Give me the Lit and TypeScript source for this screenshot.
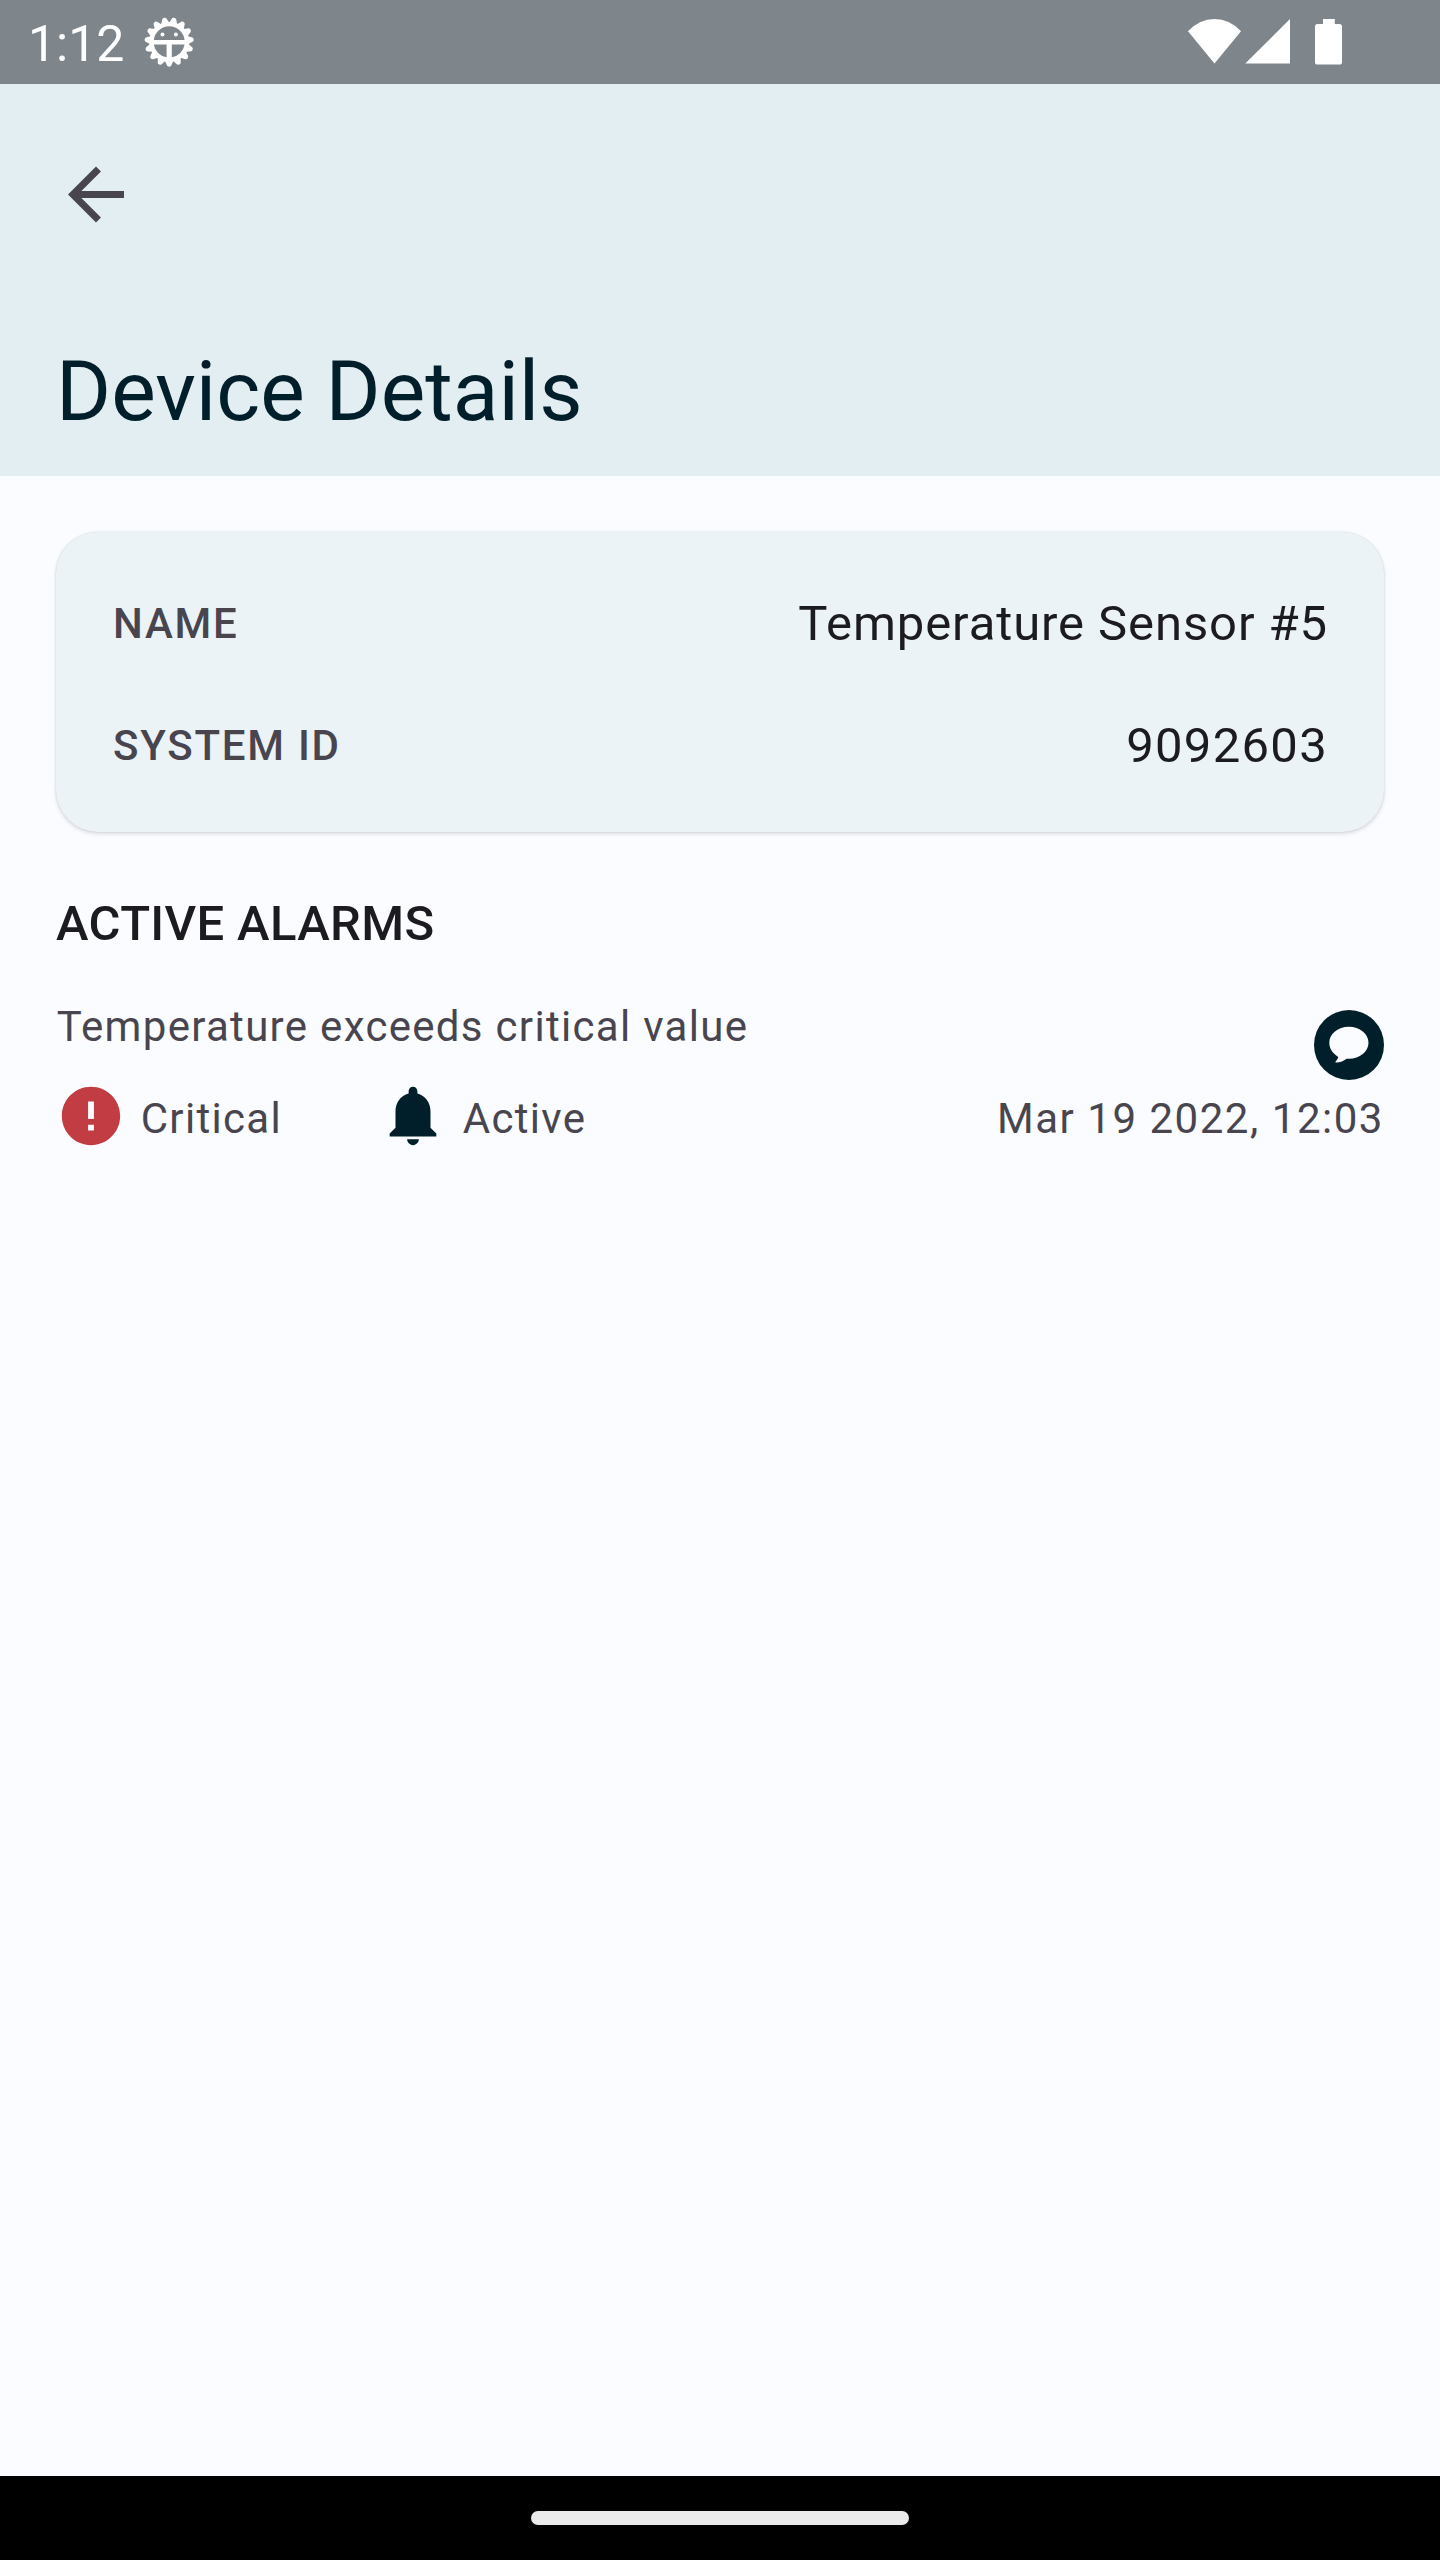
import { LitElement, html, css, svg } from "lit";
import { customElement } from "lit/decorators.js";

// Cog outline with evenly spaced rounded teeth around the origin.
const TEETH = 15;
const teeth = Array.from({ length: TEETH }, (_, i) => 180 + (360 / TEETH) * i);

@customElement("status-bar")
class StatusBar extends LitElement {
  static styles = css`
    :host {
      display: flex;
      align-items: center;
      justify-content: space-between;
      box-sizing: border-box;
      height: 84px;
      padding: 0 96px 0 28px;
      background: #7f868b;
      color: #fff;
    }
    .side {
      display: flex;
      align-items: center;
    }
    .clock {
      font-size: 50px;
      line-height: 58px;
      width: 115px;
      padding-top: 3px;
    }
    svg {
      display: block;
      fill: #fff;
    }
  `;

  render() {
    return html`
      <div class="side">
        <span class="clock">1:12</span>
        <svg width="52" height="52" viewBox="-26.2 -26 52 52">
          <path
            fill-rule="evenodd"
            d="M0-20A20 20 0 1 1 0 20A20 20 0 1 1 0-20ZM-15.4-2A15.5 15.5 0 0 1 15.4-2ZM-15.4 2.4H-2.6V15.3A15.5 15.5 0 0 1-15.4 2.4ZM2.6 2.4H15.4A15.5 15.5 0 0 1 2.6 15.3Z"
          />
          ${teeth.map(
            (a) => svg`<path transform="rotate(${a})" d="M-4.2-18.5L-2.5-22.7C-1.9-25.3 1.9-25.3 2.5-22.7L4.2-18.5Z"/>`
          )}
          <circle cx="-6.7" cy="-7.6" r="2" />
          <circle cx="6.7" cy="-7.6" r="2" />
        </svg>
      </div>
      <div class="side">
        <svg width="156" height="84" viewBox="1188 0 156 84">
          <path d="M1188 31.2Q1199.5 19 1214.5 19T1241 31.2L1214.5 63.5Z" />
          <path d="M1290 19V63.6H1245.3Z" />
          <path d="M1323 19H1334.8V24H1339.5Q1342 24 1342 26.5V62Q1342 64.6 1339.5 64.6H1317.5Q1315 64.6 1315 62V26.5Q1315 24 1317.5 24H1323Z" />
        </svg>
      </div>
    `;
  }
}

@customElement("top-bar")
class TopBar extends LitElement {
  static styles = css`
    :host {
      display: flex;
      flex-direction: column;
      justify-content: space-between;
      box-sizing: border-box;
      height: 392px;
      padding: 68px 56px 28px 54px;
      background: #e2eef2;
    }
    .back {
      display: block;
      width: 84px;
      height: 84px;
      fill: #49454f;
    }
    .title {
      margin: 0 0 0 2px;
      font-size: 84px;
      line-height: 112px;
      font-weight: 400;
      color: #001f2a;
    }
  `;

  render() {
    return html`
      <svg class="back" viewBox="0 -0.14 24 24">
        <path d="M20 11H7.83l5.59-5.59L12 4l-8 8 8 8 1.41-1.41L7.83 13H20v-2z" />
      </svg>
      <h1 class="title">Device Details</h1>
    `;
  }
}

@customElement("info-card")
class InfoCard extends LitElement {
  static properties = { rows: { attribute: false } };
  declare rows: [string, string][];

  static styles = css`
    :host {
      display: flex;
      flex-direction: column;
      gap: 52px;
      padding: 57px 56px 51px 57px;
      border-radius: 42px;
      background: #ebf3f6;
      box-shadow: 0 2px 4px rgba(0, 0, 0, 0.12), 0 0 2px rgba(0, 0, 0, 0.14);
    }
    .row {
      display: flex;
      align-items: center;
      justify-content: space-between;
      height: 70px;
    }
    .label {
      font-size: 42px;
      line-height: 56px;
      font-weight: 500;
      letter-spacing: 1.75px;
      color: #49454f;
    }
    .value {
      font-size: 49px;
      line-height: 70px;
      letter-spacing: 0.9px;
      color: #1c1b1f;
    }
    .numeric {
      letter-spacing: 1.3px;
    }
  `;

  render() {
    return this.rows.map(
      ([label, value]) => html`
        <div class="row">
          <span class="label">${label}</span>
          <span class="value ${/^\d+$/.test(value) ? "numeric" : ""}">${value}</span>
        </div>
      `
    );
  }
}

@customElement("alarm-item")
class AlarmItem extends LitElement {
  static styles = css`
    :host {
      display: grid;
      grid-template-columns: 322px 1fr auto;
      font-size: 42px;
      line-height: 56px;
      letter-spacing: 1.31px;
      color: #49454f;
    }
    .message {
      grid-column: 1 / 3;
      padding: 40px 0 0 0.7px;
    }
    .comment {
      display: block;
      justify-self: end;
      margin-top: 51px;
    }
    .state {
      display: flex;
      align-items: flex-start;
      gap: 14.7px;
      padding-top: 1px;
    }
    .text {
      padding-top: 10px;
    }
    .icon {
      display: block;
      width: 70px;
      height: 70px;
    }
    .critical {
      fill: #c13d43;
    }
    .bell {
      fill: #001f2a;
    }
    .time {
      padding-top: 11px;
      letter-spacing: 1.53px;
    }
  `;

  render() {
    return html`
      <span class="message">Temperature exceeds critical value</span>
      <svg class="comment" width="70" height="70" viewBox="0 0 70 70">
        <circle cx="35" cy="35" r="35" fill="#001f2a" />
        <path
          fill="#fbfcff"
          d="M34.9 16.8C45.8 16.8 54.5 23.9 54.5 32.8S45.8 48.8 34.9 48.8L32.5 48.7C29.5 50.8 26.3 52.7 22.2 52.6C21.2 52.5 21.3 51.5 22 50.9C23.3 49.7 24 48.4 24.2 46.9C18.8 43.7 15.3 38.6 15.3 32.8C15.3 23.9 24 16.8 34.9 16.8Z"
        />
      </svg>
      <div class="state">
        <svg class="icon critical" viewBox="0 0 24 24">
          <path d="M12 2C6.48 2 2 6.48 2 12s4.48 10 10 10 10-4.48 10-10S17.52 2 12 2zm1 15h-2v-2h2v2zm0-4h-2V7h2v6z" />
        </svg>
        <span class="text">Critical</span>
      </div>
      <div class="state">
        <svg class="icon bell" viewBox="0 0 24 24">
          <path d="M14 20c0 1.1-.9 2-2 2s-2-.9-2-2zM18 16v-5.5c0-3.07-1.75-5.5-4.5-6.2V3.5C13.5 2.67 12.83 2 12 2s-1.5.67-1.5 1.5v.8C7.75 5 6 7.43 6 10.5V16l-2 2v1h16v-1z" />
        </svg>
        <span class="text">Active</span>
      </div>
      <span class="time">Mar 19 2022, 12:03</span>
    `;
  }
}

@customElement("app-root")
class AppRoot extends LitElement {
  static styles = css`
    :host {
      display: flex;
      flex-direction: column;
      width: 1440px;
      height: 2560px;
      background: #fbfcff;
      font-family: Roboto, sans-serif;
      white-space: nowrap;
    }
    .content {
      flex: 1;
      padding: 56px 56px 0;
    }
    .section {
      margin: 57px 0 0;
      font-size: 49px;
      line-height: 70px;
      font-weight: 500;
      letter-spacing: 0.35px;
      color: #1c1b1f;
    }
    .nav {
      display: flex;
      align-items: center;
      justify-content: center;
      height: 84px;
      background: #000;
    }
    .handle {
      width: 378px;
      height: 14px;
      border-radius: 7px;
      background: #ebebeb;
    }
  `;

  private rows: [string, string][] = [
    ["NAME", "Temperature Sensor #5"],
    ["SYSTEM ID", "9092603"],
  ];

  render() {
    return html`
      <status-bar></status-bar>
      <top-bar></top-bar>
      <div class="content">
        <info-card .rows=${this.rows}></info-card>
        <h2 class="section">ACTIVE ALARMS</h2>
        <alarm-item></alarm-item>
      </div>
      <div class="nav"><div class="handle"></div></div>
    `;
  }
}
